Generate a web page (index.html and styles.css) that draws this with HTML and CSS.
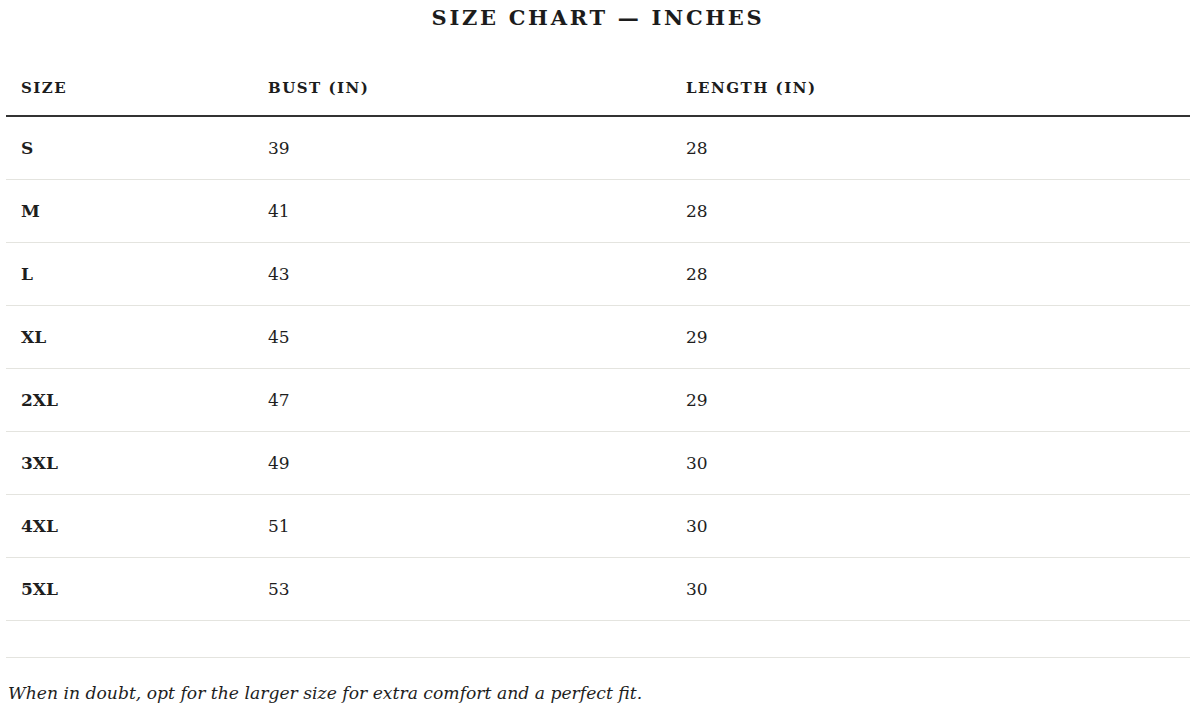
FILE: index.html
```html
<!DOCTYPE html>
<html lang="en">
<head>
<meta charset="utf-8">
<title>Size Chart</title>
<link rel="stylesheet" href="styles.css">
</head>
<body>
<div class="chart">
  <h2 class="chart-title">SIZE CHART — INCHES</h2>
  <table class="size-table">
    <colgroup>
      <col class="col-size">
      <col class="col-bust">
      <col class="col-length">
    </colgroup>
    <thead>
      <tr><th>SIZE</th><th>BUST (IN)</th><th>LENGTH (IN)</th></tr>
    </thead>
    <tbody>
      <tr><td class="size">S</td><td>39</td><td>28</td></tr>
      <tr><td class="size">M</td><td>41</td><td>28</td></tr>
      <tr><td class="size">L</td><td>43</td><td>28</td></tr>
      <tr><td class="size">XL</td><td>45</td><td>29</td></tr>
      <tr><td class="size">2XL</td><td>47</td><td>29</td></tr>
      <tr><td class="size">3XL</td><td>49</td><td>30</td></tr>
      <tr><td class="size">4XL</td><td>51</td><td>30</td></tr>
      <tr><td class="size">5XL</td><td>53</td><td>30</td></tr>
    </tbody>
  </table>
  <div class="chart-note">
    <p>When in doubt, opt for the larger size for extra comfort and a perfect fit.</p>
  </div>
</div>
</body>
</html>
```
FILE: styles.css
```css
html, body {
  margin: 0;
  padding: 0;
  background: #ffffff;
}
body {
  font-family: "DejaVu Serif", "Liberation Serif", serif;
  color: #1e1e1e;
}
.chart {
  width: 1184px;
  margin-left: 6px;
}
.chart-title {
  margin: 0;
  padding-top: 5px;
  height: 52px;
  box-sizing: border-box;
  text-align: center;
  font-size: 21px;
  line-height: 26px;
  font-weight: bold;
  letter-spacing: 2.7px;
  color: #1c1c1c;
}
.size-table {
  width: 1184px;
  border-collapse: collapse;
  table-layout: fixed;
}
.col-size { width: 247px; }
.col-bust { width: 418px; }
.col-length { width: 519px; }
.size-table th {
  text-align: left;
  font-size: 15px;
  font-weight: bold;
  letter-spacing: 1.5px;
  line-height: 22px;
  padding: 25px 15px 16px;
  border-bottom: 2px solid #333333;
  color: #1c1c1c;
}
.size-table td {
  font-size: 17px;
  line-height: 22px;
  padding: 20px 15px;
  border-bottom: 1px solid #e4e4df;
}
.size-table td.size {
  font-weight: bold;
}
.chart-note {
  margin-top: 36px;
  border-top: 1px solid #e4e4df;
}
.chart-note p {
  margin: 0;
  padding: 23px 0 0 2px;
  font-style: italic;
  font-size: 17.2px;
  line-height: 24px;
}
```
